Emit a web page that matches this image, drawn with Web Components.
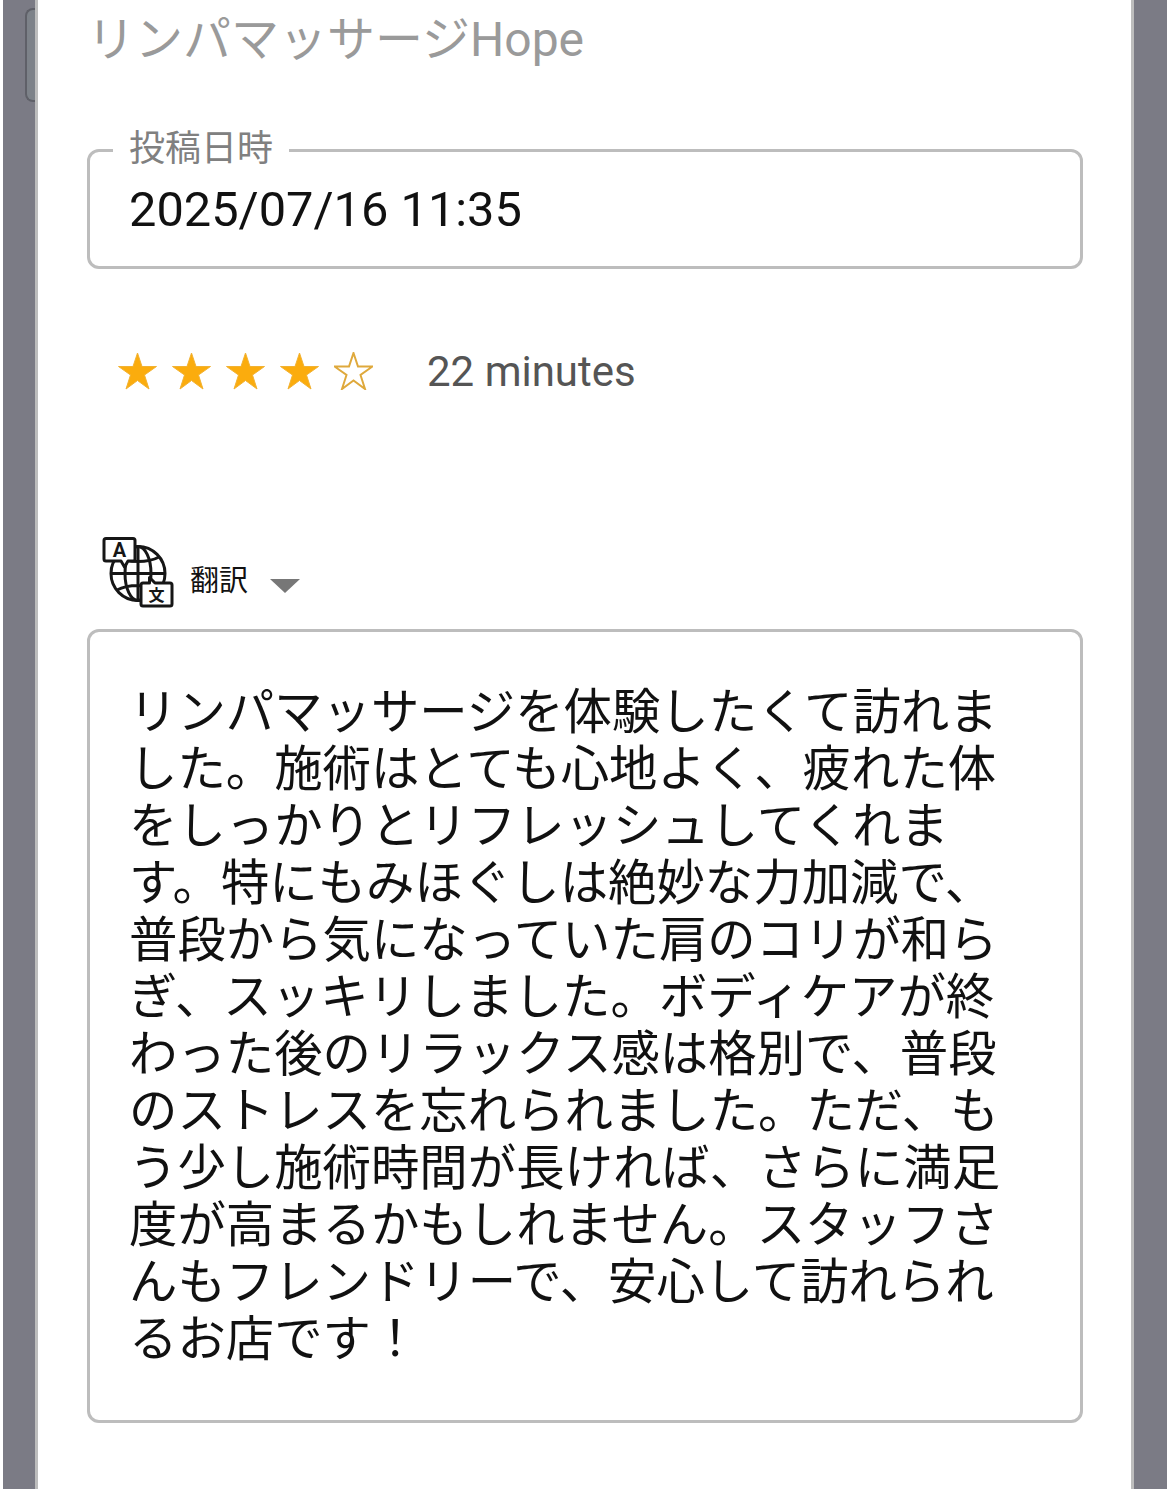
<!DOCTYPE html>
<html lang="ja">
<head>
<meta charset="utf-8">
<title>口コミ</title>
<style>
  html, body { margin: 0; background: #fff; }
  body { font-family: Roboto, "Noto Sans CJK JP", sans-serif; height: 1489px; overflow: hidden; }
</style>
</head>
<body>
<review-sheet>
  <shop-title>リンパマッサージHope</shop-title>
  <date-field label="投稿日時">2025/07/16 11:35</date-field>
  <rating-row stars="4" elapsed="22 minutes"></rating-row>
  <translate-menu>翻訳</translate-menu>
  <review-text>リンパマッサージを体験したくて訪れました。施術はとても心地よく、疲れた体をしっかりとリフレッシュしてくれます。特にもみほぐしは絶妙な力加減で、普段から気になっていた肩のコリが和らぎ、スッキリしました。ボディケアが終わった後のリラックス感は格別で、普段のストレスを忘れられました。ただ、もう少し施術時間が長ければ、さらに満足度が高まるかもしれません。スタッフさんもフレンドリーで、安心して訪れられるお店です！</review-text>
</review-sheet>

<script>
const FONT = 'Roboto, "Noto Sans CJK JP", sans-serif'

customElements.define('review-sheet', class extends HTMLElement {
  constructor() {
    super()
    this.attachShadow({ mode: 'open' }).innerHTML = `
      <style>
        :host {
          display: grid;
          grid-template-columns: 32px 1fr 33px;
          height: 1489px;
          padding: 0 3px;
          box-sizing: border-box;
          font-family: ${FONT};
        }
        .side { background: #7b7b85; position: relative; }
        .handle {
          position: absolute;
          left: 22px; top: 8px;
          width: 10px; height: 94px;
          box-sizing: border-box;
          background: #7d8289;
          border: 2px solid #5f6068;
          border-right: 0;
          border-radius: 8px 0 0 8px;
        }
        main {
          background: #fff;
          border-left: 3px solid #bdbdbd;
          border-right: 3px solid #bdbdbd;
          padding: 0 48px 0 49px;
          min-width: 0;
        }
      </style>
      <div class="side"><div class="handle"></div></div>
      <main><slot></slot></main>
      <div class="side"></div>
    `
  }
})

customElements.define('shop-title', class extends HTMLElement {
  constructor() {
    super()
    this.attachShadow({ mode: 'open' }).innerHTML = `
      <style>
        :host {
          display: block;
          height: 78px;
          font-size: 48px;
          line-height: 80px;
          color: #9a9a9a;
          white-space: nowrap;
        }
      </style>
      <slot></slot>
    `
  }
})

customElements.define('date-field', class extends HTMLElement {
  constructor() {
    super()
    this.attachShadow({ mode: 'open' }).innerHTML = `
      <style>
        :host { display: block; height: 192px; }
        fieldset {
          margin: 50px 0 0;
          padding: 0 0 0 23px;
          height: 141px;
          box-sizing: border-box;
          border: 3px solid #bdbdbd;
          border-radius: 12px;
          min-width: 0;
        }
        legend {
          padding: 0 16px 2px;
          font-size: 36px;
          line-height: 42px;
          color: #808080;
        }
        .value {
          font-size: 48.75px;
          line-height: 56px;
          color: #111;
          margin-top: 10px;
          padding-left: 16px;
        }
      </style>
      <fieldset>
        <legend></legend>
        <div class="value"><slot></slot></div>
      </fieldset>
    `
  }
  connectedCallback() {
    this.shadowRoot.querySelector('legend').textContent = this.getAttribute('label')
  }
})

customElements.define('rating-row', class extends HTMLElement {
  constructor() {
    super()
    this.attachShadow({ mode: 'open' }).innerHTML = `
      <style>
        :host {
          display: flex;
          align-items: center;
          height: 90px;
          padding-left: 31px;
          margin-top: 6px;
          margin-bottom: 1px;
          box-sizing: border-box;
          color: #555;
          font-size: 42px;
        }
        .stars { display: flex; gap: 15px; }
        svg { display: block; width: 39px; height: 38px; }
        span { margin-left: 54px; }
      </style>
      <div class="stars"></div>
      <span></span>
    `
  }
  connectedCallback() {
    const filled = Number(this.getAttribute('stars'))
    const pts = '19.5,1 24,14.5 38.5,14.5 26.5,23 31,37 19.5,28.5 8,37 12.5,23 0.5,14.5 15,14.5'
    let html = ''
    for (let i = 0; i < 5; i++) {
      html += i < filled
        ? `<svg viewBox="0 0 39 38"><polygon points="${pts}" fill="#fbac0d" stroke="#f2b233" stroke-width="1"/></svg>`
        : `<svg viewBox="0 0 39 38"><polygon points="${pts}" fill="#fff" stroke="#dfa93c" stroke-width="2"/></svg>`
    }
    this.shadowRoot.querySelector('.stars').innerHTML = html
    this.shadowRoot.querySelector('span').textContent = this.getAttribute('elapsed')
  }
})

customElements.define('translate-menu', class extends HTMLElement {
  constructor() {
    super()
    this.attachShadow({ mode: 'open' }).innerHTML = `
      <style>
        :host {
          display: flex;
          align-items: center;
          height: 80px;
          margin-top: 118px;
          padding-left: 13px;
          color: #111;
          font-size: 29px;
        }
        svg.globe { display: block; width: 80px; height: 80px; flex: none; }
        .name { margin-left: 10px; line-height: 80px; position: relative; top: 7px; }
        svg.arrow { display: block; width: 30px; height: 14px; margin-left: 22px; margin-top: 24px; }
      </style>
      <svg class="globe" viewBox="10 5 80 80" fill="none" stroke="#161616" stroke-width="3" stroke-linejoin="round">
        <circle cx="48" cy="44.5" r="27"/>
        <ellipse cx="48" cy="44.5" rx="13" ry="27"/>
        <path d="M48 17.5V71.5M21 44.5H75M27 28C38 34 58 34 69 28M27 61C38 55 58 55 69 61"/>
        <path d="M16 9.5H43Q45 9.5 45 11.5V30Q45 32 43 32H38L34.5 38L31 32H16Q14 32 14 30V11.5Q14 9.5 16 9.5Z" fill="#fff"/>
        <path d="M53 54H59.5L59.5 48.5L65 54H80Q82 54 82 56V75Q82 77 80 77H53Q51 77 51 75V56Q51 54 53 54Z" fill="#fff"/>
        <text x="29.5" y="27.5" text-anchor="middle" font-family="Roboto, sans-serif" font-weight="700" font-size="20" fill="#161616" stroke="none">A</text>
        <text x="66.5" y="72" text-anchor="middle" font-family="'Noto Sans CJK JP', sans-serif" font-weight="700" font-size="16" fill="#161616" stroke="none">文</text>
      </svg>
      <span class="name"><slot></slot></span>
      <svg class="arrow" viewBox="0 0 30 14"><polygon points="0,0 30,0 15,14" fill="#777"/></svg>
    `
  }
})

customElements.define('review-text', class extends HTMLElement {
  constructor() {
    super()
    this.attachShadow({ mode: 'open' }).innerHTML = `
      <style>
        :host {
          display: block;
          margin-top: 15px;
          height: 794px;
          box-sizing: border-box;
          border: 3px solid #bdbdbd;
          border-radius: 12px;
          padding: 48px 70px 0 39px;
          font-family: "Noto Sans CJK JP", sans-serif;
          font-size: 48.4px;
          line-height: 57px;
          color: #111;
          line-break: strict;
        }
      </style>
      <slot></slot>
    `
  }
})
</script>
</body>
</html>
